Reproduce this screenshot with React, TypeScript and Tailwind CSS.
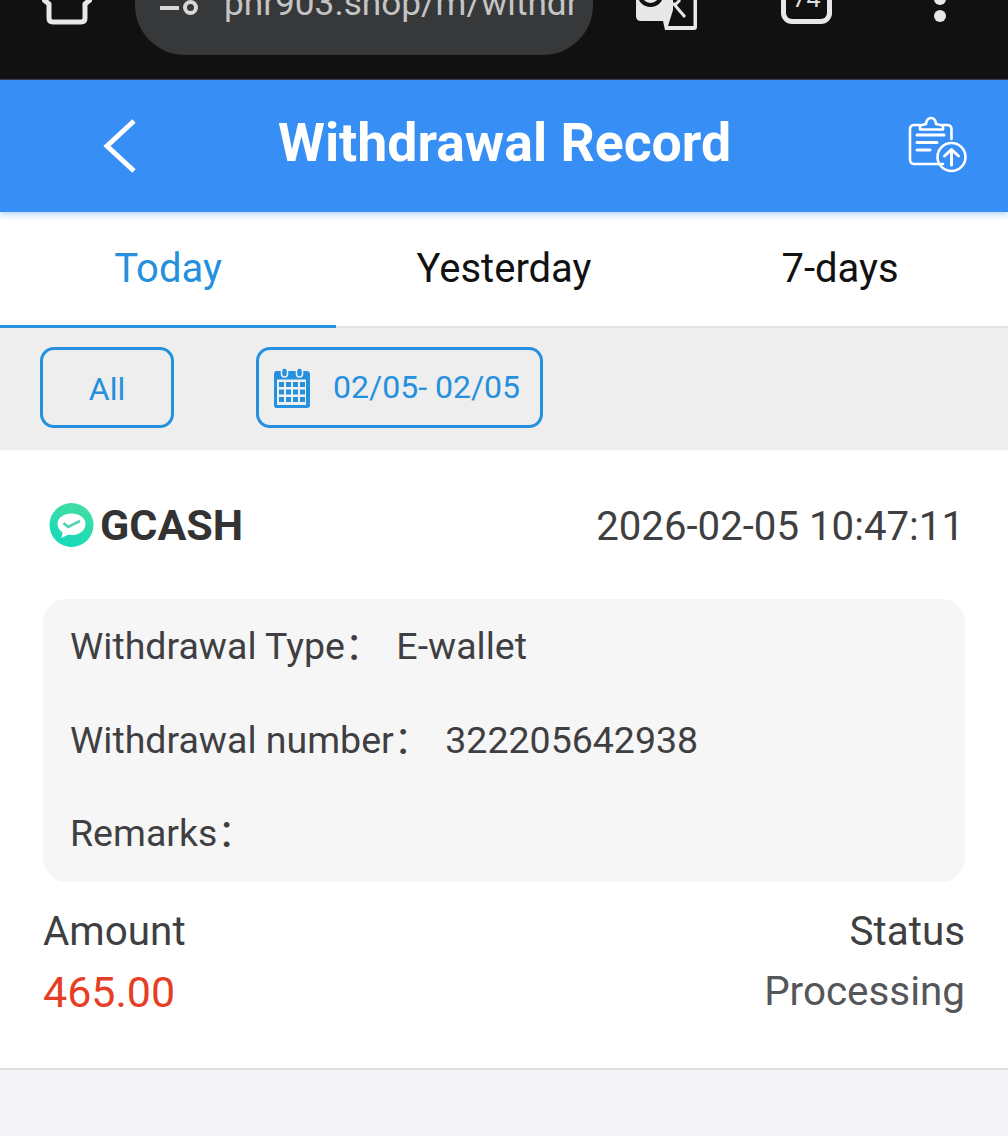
const ClipboardUpload = () => (
  <svg width="62" height="62" viewBox="0 0 62 62" fill="none" stroke="white" strokeWidth="2.6" strokeLinecap="round" strokeLinejoin="round">
    <path d="M36 49H7.5C4.5 49 3 47.5 3 44.5V14.5C3 11.5 4.5 10 7.5 10H13" />
    <path d="M36 10H40C43 10 44.5 11.5 44.5 14.5V24" />
    <path d="M13 14.5V10.5L19 9C19.5 4.5 21.5 3 24 3C26.5 3 28.5 4.5 29 9L36 10.5V14.5Z" />
    <path d="M10 20H37M10 27.5H30M10 35H23" strokeWidth="3" />
    <circle cx="44.5" cy="42" r="14" />
    <path d="M44.5 50V34.5M37.5 41L44.5 34.5L51.5 41" strokeWidth="3" />
  </svg>
);

const CalendarIcon = () => (
  <svg width="36" height="41" viewBox="0 0 36 41">
    <path d="M2 4H33C34.5 4 36 5.5 36 7V38.5C36 40 34.5 41 33 41H2C1 41 0 40 0 38.5V7C0 5.5 1 4 2 4Z" fill="#2590dd" />
    <rect x="3" y="12.5" width="29" height="25.5" fill="#eeeff0" />
    <rect x="7.5" y="1" width="6" height="9" rx="3" fill="#2590dd" stroke="#eeeff0" strokeWidth="1.5" />
    <rect x="22.5" y="1" width="6" height="9" rx="3" fill="#2590dd" stroke="#eeeff0" strokeWidth="1.5" />
    <g fill="#2590dd">
      <rect x="5" y="15" width="5" height="5" />
      <rect x="12" y="15" width="5" height="5" />
      <rect x="19" y="15" width="5" height="5" />
      <rect x="26" y="15" width="5" height="5" />
      <rect x="5" y="22.5" width="5" height="5" />
      <rect x="12" y="22.5" width="5" height="5" />
      <rect x="19" y="22.5" width="5" height="5" />
      <rect x="26" y="22.5" width="5" height="5" />
      <rect x="5" y="30" width="5" height="5" />
      <rect x="12" y="30" width="5" height="5" />
      <rect x="19" y="30" width="5" height="5" />
      <rect x="26" y="30" width="5" height="5" />
    </g>
  </svg>
);

const GcashLogo = () => (
  <svg width="45" height="44" viewBox="0 0 44 44">
    <defs>
      <linearGradient id="gc" x1="0.7" y1="0" x2="0.3" y2="1">
        <stop offset="0" stopColor="#44dda2" />
        <stop offset="1" stopColor="#14dabb" />
      </linearGradient>
    </defs>
    <circle cx="22" cy="22" r="22" fill="url(#gc)" />
    <path d="M22 10.5C14 10.5 8 15 8 21C8 24.5 10 27.5 13 29.2L12 35L18.5 31.8C19.5 32 21 32.1 22 32.1C30 32.1 36 27.5 36 21C36 15 30 10.5 22 10.5Z" fill="white" />
    <path d="M14 20L18.5 24L30.5 18" fill="none" stroke="#4fd3b4" strokeWidth="2.6" />
  </svg>
);

const HouseStub = () => (
  <svg width="50" height="25" viewBox="0 0 50 25" fill="none" stroke="#e8e8e8" strokeWidth="5" strokeLinejoin="round">
    <path d="M1 -1L7 4V18C7 20.5 8.5 22 11 22H39C41.5 22 43 20.5 43 18V4L49 -1" />
  </svg>
);

// translate/lens shortcut, only its lower half shows in the photo
const LensTranslate = () => (
  <svg width="62" height="31" viewBox="0 0 62 31">
    <path d="M0 0V16Q0 21 5 21H27L29 30H58Q61 30 61 27V0H57.5V26H32L37 10V0Z" fill="#e8e8e8" />
    <circle cx="14.5" cy="-6" r="11" fill="#e8e8e8" stroke="#111111" strokeWidth="4" />
    <path d="M37 3L49 17M44 0L39 5" fill="none" stroke="#e8e8e8" strokeWidth="3" />
  </svg>
);

const App = () => {
  return (
    <div className="w-[1008px] h-[1136px] overflow-hidden flex flex-col bg-[#f3f3f8] font-['Roboto','Noto_Sans_CJK_SC',sans-serif]">
      {/* browser bar, cut off at the top of the photo */}
      <div className="h-[80px] shrink-0 bg-[#111111] border-b border-[#3a3c40] overflow-hidden flex items-start">
        <div className="w-[135px] shrink-0 pl-[42px]">
          <HouseStub />
        </div>
        <div className="w-[458px] h-[55px] shrink-0 bg-[#37383a] rounded-b-[50px] flex items-start pl-[25px] gap-[9px]">
          <div className="w-[55px] h-[15px] flex items-center gap-[4px]">
            <div className="w-[19px] h-[4px] bg-[#d8d8d8]"></div>
            <div className="w-[15px] h-[15px] rounded-full border-[4px] border-[#d8d8d8]"></div>
          </div>
          <span className="text-[#c4c4c4] text-[35.2px] leading-[36px] -mt-[15px]">phr903.shop/m/withdr</span>
        </div>
        <div className="ml-[43px] shrink-0">
          <LensTranslate />
        </div>
        <div className="ml-[83px] w-[51px] h-[24px] shrink-0 border-[5px] border-t-0 border-[#e8e8e8] rounded-b-[11px] flex justify-center">
          <span className="text-[#dddddd] text-[25px] leading-[26px] -mt-[14px]">74</span>
        </div>
        <div className="ml-[100px] w-[16px] flex flex-col items-center gap-[5px] -mt-[7px]">
          <div className="w-[12px] h-[12px] rounded-full bg-[#e8e8e8]"></div>
          <div className="w-[12px] h-[12px] rounded-full bg-[#e8e8e8]"></div>
        </div>
      </div>

      {/* header */}
      <div className="h-[132px] shrink-0 bg-[#378ef4] shadow-[0_3px_6px_rgba(55,142,244,0.35)] flex items-center relative z-10">
        <div className="w-[278px] shrink-0 pl-[100px]">
          <svg width="38" height="54" viewBox="0 0 38 54" fill="none" stroke="white" strokeWidth="5">
            <path d="M34 2L7 27L34 52" />
          </svg>
        </div>
        <h1 className="text-white font-bold text-[53.6px] leading-none flex-1 mb-[6px]">Withdrawal Record</h1>
        <div className="pr-[39px]">
          <ClipboardUpload />
        </div>
      </div>

      {/* tabs */}
      <div className="h-[116px] shrink-0 bg-white border-b-2 border-[#e3e3e6] flex text-[40px]">
        <div className="flex-1 flex items-center justify-center text-[#2590dd] border-b-[3px] border-[#2590dd] -mb-[2px]">Today</div>
        <div className="flex-1 flex items-center justify-center text-[#111111]">Yesterday</div>
        <div className="flex-1 flex items-center justify-center text-[#111111]">7-days</div>
      </div>

      {/* filters */}
      <div className="h-[122px] shrink-0 bg-[#eeeeef] flex items-start pt-[19px] pl-[40px] gap-[82px] text-[#2590dd] text-[32px]">
        <div className="w-[134px] h-[81px] border-[3px] border-[#2590dd] rounded-[14px] flex items-center justify-center pt-[2px]">All</div>
        <div className="w-[287px] h-[81px] border-[3px] border-[#2590dd] rounded-[14px] flex items-center pl-[15px] gap-[23px]">
          <CalendarIcon />
          <span className="pb-[2px]">02/05- 02/05</span>
        </div>
      </div>

      {/* record */}
      <div className="h-[620px] shrink-0 bg-white border-b-2 border-[#dddde0] px-[43px] text-[#3f3f42] text-[40.4px] leading-[44px]">
        <div className="flex items-center justify-between pt-[53px]">
          <div className="flex items-center gap-[6px] pl-[6px]">
            <GcashLogo />
            <span className="font-bold text-[#333333] text-[43px] leading-[44px]">GCASH</span>
          </div>
          <span className="text-[40.2px] pr-[1px] translate-y-[2px]">2026-02-05 10:47:11</span>
        </div>

        <div className="mt-[52px] h-[283px] bg-[#f6f6f7] rounded-[24px] pl-[27px] pt-[25px] flex flex-col gap-[49.5px] text-[37.5px]">
          <div>Withdrawal Type：<span className="ml-[14px]">E-wallet</span></div>
          <div>Withdrawal number：<span className="ml-[14px]">322205642938</span></div>
          <div>Remarks：</div>
        </div>

        <div className="flex justify-between mt-[28px]">
          <div className="flex flex-col gap-[16px]">
            <span>Amount</span>
            <span className="text-[#e53e25] text-[43px]">465.00</span>
          </div>
          <div className="flex flex-col items-end gap-[16px]">
            <span>Status</span>
            <span className="text-[#55565a]">Processing</span>
          </div>
        </div>
      </div>
    </div>
  );
};

export default App;
